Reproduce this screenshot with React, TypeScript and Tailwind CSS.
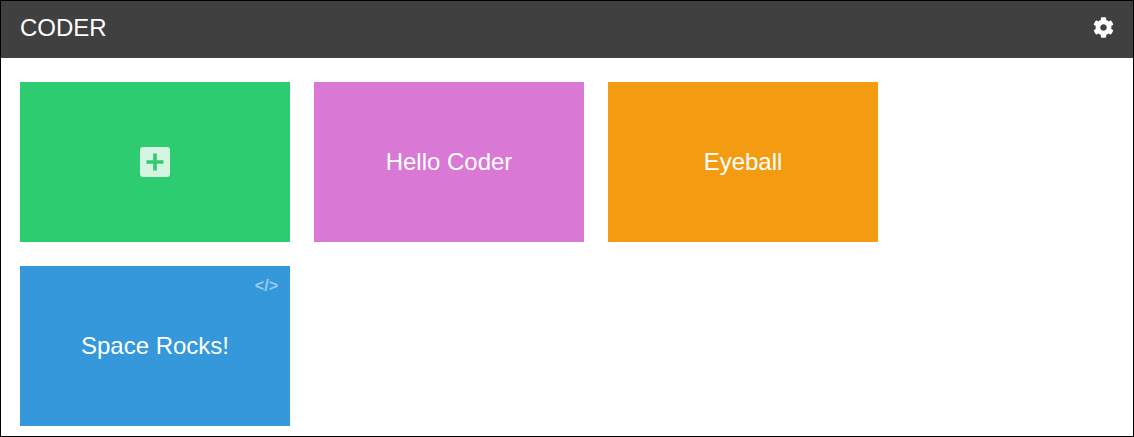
import React from "react";
import { FaCog } from "react-icons/fa";

function Card({ color, children }: { color: string; children: React.ReactNode }) {
  return (
    <div className={`relative w-[270px] h-40 flex items-center justify-center text-white text-2xl ${color}`}>
      {children}
    </div>
  );
}

function App() {
  return (
    <div className="h-[437px] border border-black bg-white flex flex-col font-['Liberation_Sans',Arial,sans-serif]">
      <header className="h-[57px] bg-[#404040] flex items-center justify-between pl-[19px] pr-[19px] pb-1 shrink-0">
        <h1 className="text-2xl text-white font-normal">CODER</h1>
        <FaCog className="text-white w-[21px] h-[21px]" />
      </header>
      <div className="pl-[19px] pt-6 flex flex-wrap gap-6 w-[900px]">
        <Card color="bg-[#2ecc71]">
          <svg width="30" height="30" viewBox="0 0 30 30" aria-label="Add">
            <rect width="30" height="30" rx="3" fill="#fff" fillOpacity="0.8" />
            <path d="M13.2 6.5h3.6v6.7h6.7v3.6h-6.7v6.7h-3.6v-6.7H6.5v-3.6h6.7z" fill="#2ecc71" />
          </svg>
        </Card>
        <Card color="bg-[#da78d6]">Hello Coder</Card>
        <Card color="bg-[#f39c12]">Eyeball</Card>
        <Card color="bg-[#3498db]">
          <span className="absolute top-[11px] right-3 text-base leading-[18px] font-bold text-white/50">&lt;/&gt;</span>
          Space Rocks!
        </Card>
      </div>
    </div>
  );
}

export default App;
